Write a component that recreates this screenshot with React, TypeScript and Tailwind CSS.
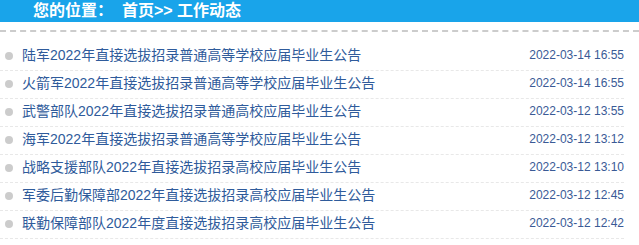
import React from "react";

const items = [
  ["陆军2022年直接选拔招录普通高等学校应届毕业生公告", "2022-03-14 16:55"],
  ["火箭军2022年直接选拔招录普通高等学校应届毕业生公告", "2022-03-14 16:55"],
  ["武警部队2022年直接选拔招录普通高校应届毕业生公告", "2022-03-12 13:55"],
  ["海军2022年直接选拔招录普通高等学校应届毕业生公告", "2022-03-12 13:12"],
  ["战略支援部队2022年直接选拔招录高校应届毕业生公告", "2022-03-12 13:10"],
  ["军委后勤保障部2022年直接选拔招录高校应届毕业生公告", "2022-03-12 12:45"],
  ["联勤保障部队2022年度直接选拔招录高校应届毕业生公告", "2022-03-12 12:42"],
];

export default function App() {
  return (
    <div
      className="w-[639px] h-[245px] bg-white overflow-hidden"
      style={{ fontFamily: '"Liberation Sans", "Noto Sans CJK SC", sans-serif' }}
    >
      <div className="h-[22px] bg-[#19a4ea] flex items-center pl-[33px]">
        <span className="text-white font-bold text-[16px] leading-[22px] whitespace-pre">
          您的位置：  首页&gt;&gt; 工作动态
        </span>
      </div>
      <div className="mt-[8px] border-t-2 border-dashed border-[#cccccc]" />
      <ul className="pt-[11px] pr-[15px]">
        {items.map(([t, d], i) => (
          <li
            key={i}
            className="h-[28px] border-b border-dashed border-[#e8e8e8] flex items-start"
          >
            <div className="h-[25px] flex items-center w-full">
              <span className="ml-[5px] w-[8px] h-[8px] rounded-full bg-[#cccccc] shrink-0" />
              <span className="ml-[9px] text-[14px] text-[#2f5b9b] leading-[25px] whitespace-nowrap">
                {t}
              </span>
              <span className="ml-auto text-[12px] text-[#3a5a96] leading-[25px] whitespace-nowrap">
                {d}
              </span>
            </div>
          </li>
        ))}
      </ul>
    </div>
  );
}
